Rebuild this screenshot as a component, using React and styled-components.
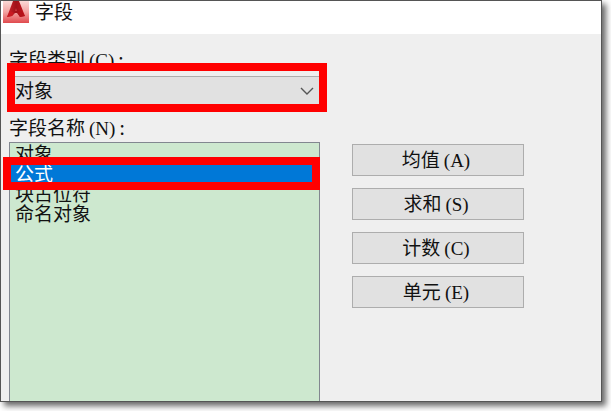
import React, { useState } from "react";
import styled, { createGlobalStyle } from "styled-components";

const GlobalStyle = createGlobalStyle`
  * { box-sizing: border-box; }
  body {
    min-height: 100vh;
    margin: 0;
    background: #fff;
    color: #111;
    font-family: "Noto Sans CJK SC", sans-serif;
    font-size: 19px;
    line-height: 20px;
  }
`;

const Page = styled.div`
  height: 100vh;
  padding: 0 9px 9px 0;
  overflow: hidden;
`;

const Dialog = styled.main`
  display: flex;
  flex-direction: column;
  height: 100%;
  border: 1px solid #555;
  background: #efefef;
  box-shadow: 4px 4px 6px 0 rgba(0, 0, 0, 0.6);
`;

const TitleBar = styled.header`
  display: flex;
  flex: none;
  align-items: flex-start;
  gap: 6px;
  height: 33px;
  padding-left: 2px;
  background: #fff;
`;

const Title = styled.h1`
  margin: 0;
  font-size: 19px;
  font-weight: 400;
  line-height: 20px;
`;

const Content = styled.div`
  display: grid;
  flex: 1;
  grid-template-columns: 311fr 172fr;
  gap: 32px;
  min-height: 0;
  padding: 15px 77px 0 8px;
`;

const FieldColumn = styled.div`
  display: flex;
  flex-direction: column;
  min-width: 0;
`;

const Label = styled.label`
  display: block;
  height: 20px;
  white-space: nowrap;
`;

const AccessKey = styled.span`
  padding: 0 4px;
  font-family: "Liberation Serif", serif;
  font-size: 19px;
`;

const Highlight = styled.span`
  position: absolute;
  inset: ${(p) => p.$inset};
  z-index: 1;
  border: 8px solid #f00;
  pointer-events: none;
`;

const SelectBox = styled.div`
  position: relative;
  margin: 7px 0 11px;
`;

const Select = styled.select`
  display: block;
  width: 100%;
  height: 30px;
  padding: 0 5px 2px;
  appearance: none;
  border: 1px solid #adadad;
  border-radius: 0;
  background: #e1e1e1;
  color: inherit;
  font: inherit;
`;

const Chevron = styled.svg`
  position: absolute;
  top: 11px;
  right: 6px;
  pointer-events: none;
`;

const ListBox = styled.ul`
  flex: 1;
  margin: 5px 0 0;
  padding: 0;
  border: 1px solid #828790;
  border-bottom: 0;
  background: #cde8cf;
  list-style: none;
`;

const ListItem = styled.li`
  position: relative;
  height: 20px;
  padding-left: 5px;
  background: ${(p) => (p.$selected ? "#0078d7" : "transparent")};
  color: ${(p) => (p.$selected ? "#fff" : "inherit")};
  cursor: default;
`;

const ButtonColumn = styled.div`
  display: flex;
  flex-direction: column;
  gap: 12px;
  padding-top: 95px;
`;

const Button = styled.button`
  height: 32px;
  padding: 0;
  border: 1px solid #adadad;
  border-radius: 0;
  background: #e1e1e1;
  color: inherit;
  font: inherit;
`;

const names = ["对象", "公式", "块占位符", "命名对象"];
const actions = [
  ["均值", "(A)"],
  ["求和", "(S)"],
  ["计数", "(C)"],
  ["单元", "(E)"],
];

function Logo() {
  return (
    <svg width="26" height="22" viewBox="0 0 26 22" aria-hidden="true">
      <defs>
        <linearGradient id="tile" x1="0" y1="0" x2="0" y2="1">
          <stop offset="0" stopColor="#fbd9d6" />
          <stop offset="0.5" stopColor="#f3a3a1" />
          <stop offset="1" stopColor="#e04a4e" />
        </linearGradient>
        <linearGradient id="mark" x1="0" y1="0" x2="1" y2="0">
          <stop offset="0" stopColor="#d0252b" />
          <stop offset="0.5" stopColor="#a01118" />
          <stop offset="1" stopColor="#c5161d" />
        </linearGradient>
      </defs>
      <path d="M0 0H26V22H0Z" fill="url(#tile)" />
      <path d="M10 0H16L22 15L17 16L14 12H12L9 15L4 16Z" fill="url(#mark)" />
      <path d="M13 7L14 10H12Z" fill="#c8383c" />
      <path d="M11 12L9 15L4 16L7 10Z" fill="#c81a22" />
      <path d="M15 12L18 10L22 15L17 16Z" fill="#b51219" />
    </svg>
  );
}

export default function App() {
  const [selected, setSelected] = useState("公式");
  return (
    <>
      <GlobalStyle />
      <Page>
        <Dialog>
          <TitleBar>
            <Logo />
            <Title>字段</Title>
          </TitleBar>
          <Content>
            <FieldColumn>
              <Label htmlFor="category">
                字段类别<AccessKey>(C)</AccessKey>:
              </Label>
              <SelectBox>
                <Select id="category" defaultValue="对象">
                  <option>对象</option>
                </Select>
                <Chevron width="14" height="9" viewBox="0 0 14 9" aria-hidden="true">
                  <path d="M1 1L7 7L13 1" fill="none" stroke="#555" strokeWidth="1.4" />
                </Chevron>
                <Highlight $inset="-13px -7px -6px -2px" />
              </SelectBox>
              <Label as="div" id="names-label">
                字段名称<AccessKey>(N)</AccessKey>:
              </Label>
              <ListBox role="listbox" aria-labelledby="names-label" tabIndex={0}>
                {names.map((name) => (
                  <ListItem
                    key={name}
                    role="option"
                    aria-selected={name === selected}
                    $selected={name === selected}
                    onClick={() => setSelected(name)}
                  >
                    {name}
                    {name === selected && <Highlight $inset="-6px -1px -7px -7px" />}
                  </ListItem>
                ))}
              </ListBox>
            </FieldColumn>
            <ButtonColumn>
              {actions.map(([text, key]) => (
                <Button key={key} type="button">
                  {text}
                  <AccessKey>{key}</AccessKey>
                </Button>
              ))}
            </ButtonColumn>
          </Content>
        </Dialog>
      </Page>
    </>
  );
}
